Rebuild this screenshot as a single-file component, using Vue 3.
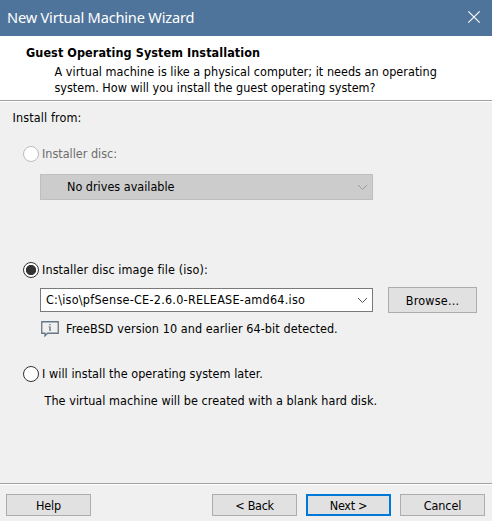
<script setup>
import { ref } from 'vue'

const source = ref('iso')
</script>

<template>
  <div class="window">
    <header class="titlebar">
      <h1>New Virtual Machine Wizard</h1>
      <svg class="close" viewBox="0 0 14 14" width="14" height="14">
        <path d="M1.3 1.3 12.7 12.7M12.7 1.3 1.3 12.7" fill="none" stroke="#fff" stroke-width="1.15" />
      </svg>
    </header>

    <section class="banner">
      <h2>Guest Operating System Installation</h2>
      <p class="intro-a">A virtual machine is like a physical computer; it needs an operating</p>
      <p class="intro-b">system. How will you install the guest operating system?</p>
    </section>

    <main class="body">
      <p class="prompt">Install from:</p>

      <div class="option disabled">
        <span class="radio"></span>
        <span class="disc-label">Installer disc:</span>
      </div>
      <div class="combo combo-disabled">
        <span>No drives available</span>
        <svg viewBox="0 0 11 7" width="11" height="7"><path d="M1 1 5.5 5.5 10 1" fill="none" stroke="#9b9b9b" stroke-width="1" /></svg>
      </div>

      <div class="option iso" @click="source = 'iso'">
        <span class="radio" :class="{ checked: source === 'iso' }"></span>
        <span class="iso-label">Installer disc image file (iso):</span>
      </div>
      <div class="file-row">
        <div class="combo combo-file">
          <span>C:\iso\pfSense-CE-2.6.0-RELEASE-amd64.iso</span>
          <svg viewBox="0 0 11 7" width="11" height="7"><path d="M1 1 5.5 5.5 10 1" fill="none" stroke="#555" stroke-width="1" /></svg>
        </div>
        <button class="btn browse">Browse...</button>
      </div>
      <div class="detected">
        <svg viewBox="0 0 18 16" width="18" height="16">
          <path d="M.75 .75H17.25V12.25H6.5L4 14.8V12.25H.75Z" fill="#f0f0f0" stroke="#667684" stroke-width="1.3" />
          <path d="M8.4 3H9.6V4.2H8.4ZM7.6 5.4H9.6V10H8.4V6.3H7.6Z" fill="#56616c" />
        </svg>
        <span>FreeBSD version 10 and earlier 64-bit detected.</span>
      </div>

      <div class="option later" @click="source = 'later'">
        <span class="radio" :class="{ checked: source === 'later' }"></span>
        <span class="later-label">I will install the operating system later.</span>
      </div>
      <p class="later-note">The virtual machine will be created with a blank hard disk.</p>
    </main>

    <footer class="footer">
      <button class="btn help">Help</button>
      <button class="btn back">&lt; Back</button>
      <button class="btn next">Next &gt;</button>
      <button class="btn">Cancel</button>
    </footer>
  </div>
</template>

<style>
body {
  margin: 0;
}
</style>

<style scoped>
.window {
  box-sizing: border-box;
  width: 492px;
  height: 521px;
  display: flex;
  flex-direction: column;
  overflow: hidden;
  background: #f0f0f0;
  color: #000;
  font: 12.5px/16px "DejaVu Sans Condensed", "DejaVu Sans", sans-serif;
  white-space: nowrap;
}
h1, h2, p {
  margin: 0;
}
.titlebar {
  height: 36px;
  box-sizing: border-box;
  padding: 0 11px 2px 7px;
  display: flex;
  align-items: center;
  justify-content: space-between;
  background: #4f749c;
  color: #fff;
}
.titlebar h1 {
  font: 400 14.6px/20px "Noto Sans", sans-serif;
  letter-spacing: -0.19px;
}
.banner {
  box-sizing: border-box;
  height: 66px;
  padding: 9px 0 0 54.5px;
  background: #fff;
  border-bottom: 1px solid #fff;
  box-shadow: inset 0 -1px #a0a0a0;
}
.banner h2 {
  margin: 0 0 3px -28.5px;
  font-size: 12.5px;
  line-height: 16px;
  letter-spacing: 0.08px;
}
.intro-a {
  letter-spacing: 0.03px;
}
.body {
  flex: 1;
}
.prompt {
  padding: 8px 0 0 12.5px;
  letter-spacing: 0.12px;
}
.option {
  display: flex;
  align-items: center;
  gap: 3px;
  height: 16px;
  padding-left: 23px;
}
.radio {
  box-sizing: border-box;
  width: 16px;
  height: 16px;
  border: 1px solid #333;
  border-radius: 50%;
  background: #fff;
}
.radio.checked {
  background: radial-gradient(circle, #333 4.7px, #fff 5.5px);
}
.disabled {
  margin-top: 20px;
  color: #6d6d6d;
}
.disabled .radio {
  border-color: #bcbcbc;
}
.combo {
  box-sizing: border-box;
  width: 333px;
  display: flex;
  align-items: center;
  justify-content: space-between;
  padding-right: 4px;
}
.combo-disabled {
  height: 26px;
  margin: 12px 0 0 40px;
  padding-left: 26px;
  border: 1px solid #bfbfbf;
  background: #ccc;
}
.iso {
  margin-top: 62px;
}
.iso-label {
  letter-spacing: 0.1px;
}
.file-row {
  display: flex;
  align-items: center;
  gap: 15px;
  margin: 9px 0 0 40px;
}
.combo-file {
  height: 24px;
  padding-left: 5px;
  border: 1px solid #7a7a7a;
  background: #fff;
  letter-spacing: 0.25px;
}
.btn {
  box-sizing: border-box;
  width: 85px;
  height: 22px;
  padding: 1px 0 0;
  border: 1px solid #adadad;
  background: #e1e1e1;
  color: #000;
  font: inherit;
}
.browse {
  width: 89px;
  height: 26px;
  letter-spacing: 0.2px;
}
.detected {
  display: flex;
  align-items: center;
  gap: 7px;
  height: 16px;
  margin: 8px 0 0 41px;
  letter-spacing: 0.08px;
}
.later {
  margin-top: 29px;
}
.later-label,
.later-note {
  letter-spacing: 0.05px;
}
.later-note {
  padding: 11px 0 0 44.5px;
}
.footer {
  box-sizing: border-box;
  height: 38px;
  display: flex;
  gap: 9px;
  padding: 10px 7px 0 6px;
  border-top: 1px solid #a0a0a0;
  box-shadow: inset 0 1px #fff;
}
.footer .btn {
  letter-spacing: -0.1px;
}
.help {
  margin-right: auto;
}
.footer .back {
  letter-spacing: -0.3px;
}
.footer .next {
  border: 2px solid #0078d7;
  letter-spacing: -0.3px;
}
</style>
